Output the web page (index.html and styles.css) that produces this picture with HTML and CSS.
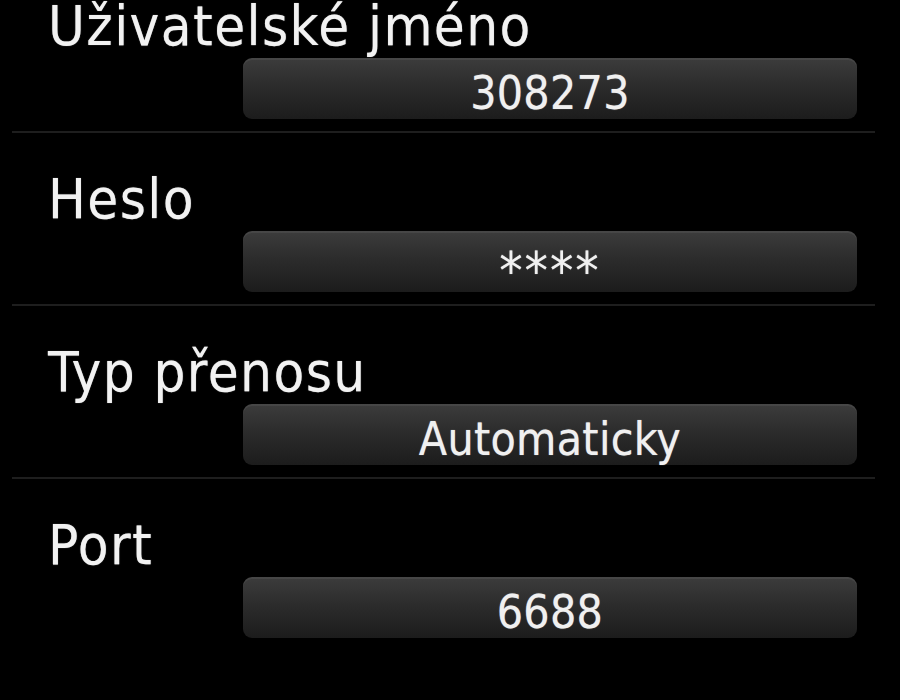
FILE: index.html
```html
<!DOCTYPE html>
<html lang="cs">
<head>
<meta charset="utf-8">
<link rel="stylesheet" href="styles.css">
</head>
<body>
<div class="list">
  <div class="row">
    <div class="label">Uživatelské jméno</div>
    <div class="field">308273</div>
  </div>
  <div class="sep"></div>
  <div class="row">
    <div class="label">Heslo</div>
    <div class="field stars">****</div>
  </div>
  <div class="sep"></div>
  <div class="row">
    <div class="label">Typ přenosu</div>
    <div class="field">Automaticky</div>
  </div>
  <div class="sep"></div>
  <div class="row">
    <div class="label">Port</div>
    <div class="field">6688</div>
  </div>
</div>
</body>
</html>
```

FILE: styles.css
```css
html, body {
  margin: 0;
  padding: 0;
  background: #000;
  height: 100%;
  overflow: hidden;
}
body {
  font-family: "DejaVu Sans Condensed", "DejaVu Sans", sans-serif;
  color: #f2f2f2;
}
.list {
  margin-top: -40px;
}
.row {
  display: flex;
  flex-direction: column;
  height: 171px;
  box-sizing: border-box;
}
.label {
  flex: none;
  margin-left: 48px;
  margin-top: 36px;
  font-size: 56px;
  line-height: 60px;
  height: 60px;
  letter-spacing: 1.4px;
  white-space: nowrap;
  text-shadow: 0 0 1px rgba(255,255,255,0.6);
}
.field {
  flex: none;
  margin-left: 243px;
  margin-top: 2px;
  width: 614px;
  height: 61px;
  box-sizing: border-box;
  border-radius: 9px;
  background: linear-gradient(#3c3c3c 0%, #2c2c2c 45%, #1c1c1c 100%);
  box-shadow: inset 0 2px 0 rgba(255,255,255,0.06);
  display: flex;
  align-items: center;
  justify-content: center;
  font-size: 46px;
  padding-top: 8px;
  line-height: 1;
  letter-spacing: 0.3px;
  color: #f0f0f0;
  text-shadow: 0 0 1px rgba(255,255,255,0.6);
}
.stars {
  font-size: 52px;
  letter-spacing: 2px;
  padding-top: 18px;
}
.sep {
  height: 2px;
  margin: 0 25px 0 12px;
  background: #1e1e1e;
}
```
